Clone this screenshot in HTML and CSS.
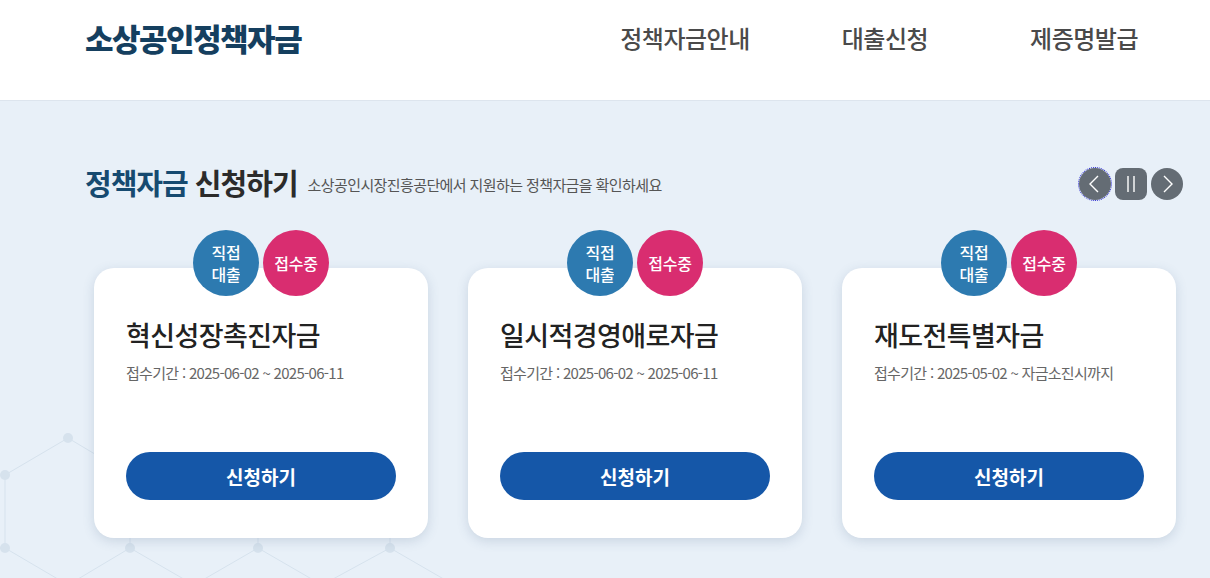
FILE: index.html
```html
<!DOCTYPE html>
<html lang="ko">
<head>
<meta charset="utf-8">
<title>소상공인정책자금</title>
<link rel="stylesheet" href="styles.css">
</head>
<body>
<header class="header">
  <div class="logo">소상공인정책자금</div>
  <nav class="nav">
    <a class="nav-item nav-1">정책자금안내</a>
    <a class="nav-item nav-2">대출신청</a>
    <a class="nav-item nav-3">제증명발급</a>
  </nav>
</header>
<main class="main">
  <svg class="bg-net" width="1210" height="477" viewBox="0 0 1210 477" aria-hidden="true">
    <g stroke="#d6e2ed" stroke-width="1" fill="none">
      <path d="M5 374 L68 337 L130 374 M5 374 L5 447 M130 374 L130 447 M5 447 L68 484 L130 447 M130 447 L194 484 L258 447 L322 484 L390 447 L454 484 M258 447 L258 420 M390 447 L390 420 M-40 447 L5 447"/>
    </g>
    <g fill="#d6e2ed">
      <circle cx="68" cy="337" r="5"/>
      <circle cx="5" cy="374" r="5"/>
      <circle cx="5" cy="447" r="5"/>
      <circle cx="130" cy="447" r="5"/>
      <circle cx="258" cy="447" r="5"/>
      <circle cx="390" cy="447" r="5"/>
    </g>
  </svg>
  <div class="title-row">
    <h2 class="sec-title"><span class="accent">정책자금</span> 신청하기</h2>
    <p class="sec-sub">소상공인시장진흥공단에서 지원하는 정책자금을 확인하세요</p>
    <div class="controls">
      <button class="ctl ctl-round ctl-focus" aria-label="이전">
        <svg width="32" height="32" viewBox="0 0 32 32"><path d="M19 8 L11 16 L19 24" stroke="#fff" stroke-width="1.4" fill="none"/></svg>
      </button>
      <button class="ctl ctl-square" aria-label="정지">
        <svg width="32" height="32" viewBox="0 0 32 32"><path d="M13 8 V24 M19 8 V24" stroke="#fff" stroke-width="1.4" fill="none"/></svg>
      </button>
      <button class="ctl ctl-round" aria-label="다음">
        <svg width="32" height="32" viewBox="0 0 32 32"><path d="M13 8 L21 16 L13 24" stroke="#fff" stroke-width="1.4" fill="none"/></svg>
      </button>
    </div>
  </div>
  <div class="cards">
    <div class="card">
      <div class="badges"><span class="badge badge-blue"><span class="bl">직접</span><span class="bl">대출</span></span><span class="badge badge-pink">접수중</span></div>
      <h3 class="card-title">혁신성장촉진자금</h3>
      <p class="card-date">접수기간 : 2025-06-02 ~ 2025-06-11</p>
      <a class="card-btn">신청하기</a>
    </div>
    <div class="card">
      <div class="badges"><span class="badge badge-blue"><span class="bl">직접</span><span class="bl">대출</span></span><span class="badge badge-pink">접수중</span></div>
      <h3 class="card-title">일시적경영애로자금</h3>
      <p class="card-date">접수기간 : 2025-06-02 ~ 2025-06-11</p>
      <a class="card-btn">신청하기</a>
    </div>
    <div class="card">
      <div class="badges"><span class="badge badge-blue"><span class="bl">직접</span><span class="bl">대출</span></span><span class="badge badge-pink">접수중</span></div>
      <h3 class="card-title">재도전특별자금</h3>
      <p class="card-date">접수기간 : 2025-05-02 ~ 자금소진시까지</p>
      <a class="card-btn">신청하기</a>
    </div>
  </div>
</main>
</body>
</html>
```
FILE: styles.css
```css
* { box-sizing: border-box; }
html, body { margin: 0; padding: 0; }
body {
  width: 1210px;
  height: 578px;
  overflow: hidden;
  font-family: "Noto Sans CJK KR", "Noto Sans", sans-serif;
  background: #e8f0f8;
}
.header {
  height: 101px;
  background: #fff;
  border-bottom: 1px solid #dde5ee;
  display: flex;
  align-items: center;
  padding-left: 85px;
}
.logo {
  font-size: 31px;
  font-weight: 900;
  color: #153f5f;
  letter-spacing: -1.5px;
  margin-top: -26px;
}
.nav {
  display: flex;
  margin-left: auto;
  margin-top: -26px;
}
.nav-item {
  font-size: 24px;
  font-weight: 500;
  color: #4a4a4a;
  letter-spacing: -0.5px;
}
.nav-1 { margin-right: 92px; }
.nav-2 { margin-right: 102px; }
.nav-3 { margin-right: 72px; }
.main {
  position: relative;
  height: 477px;
}
.bg-net {
  position: absolute;
  left: 0;
  top: 0;
}
.title-row {
  position: relative;
  display: flex;
  align-items: center;
  padding: 62px 27px 0 85px;
  height: 100px;
}
.sec-title {
  margin: 0;
  font-size: 29px;
  font-weight: 700;
  color: #2b2b2b;
  letter-spacing: -1px;
}
.accent { color: #164a70; }
.sec-sub {
  margin: 5px 0 0 10px;
  font-size: 15px;
  color: #555;
  letter-spacing: -0.6px;
}
.controls {
  margin-left: auto;
  display: flex;
  gap: 4px;
  margin-top: 4px;
}
.ctl {
  width: 32px;
  height: 32px;
  padding: 0;
  border: none;
  background: #646c74;
  display: flex;
  align-items: center;
  justify-content: center;
}
.ctl-round { border-radius: 50%; }
.ctl-square { border-radius: 8px; }
.ctl-focus { outline: 1px dotted #2a2ad0; outline-offset: 0; }
.cards {
  position: relative;
  display: flex;
  gap: 40px;
  padding: 67px 0 0 94px;
}
.card {
  position: relative;
  width: 334px;
  height: 270px;
  background: #fff;
  border-radius: 20px;
  box-shadow: 0 3px 12px rgba(60, 90, 130, 0.18);
  padding: 49px 32px 38px;
  display: flex;
  flex-direction: column;
}
.badges {
  position: absolute;
  top: -38px;
  left: 0;
  right: 0;
  display: flex;
  justify-content: center;
  gap: 4px;
}
.badge {
  width: 66px;
  height: 66px;
  border-radius: 50%;
  color: #fff;
  font-size: 16px;
  line-height: 22px;
  font-weight: 500;
  display: flex;
  flex-direction: column;
  align-items: center;
  justify-content: center;
  text-align: center;
  letter-spacing: -0.3px;
}
.bl {
  display: block;
  height: 22px;
  line-height: 22px;
  overflow: hidden;
}
.badge-blue { background: #2d7ab0; }
.badge-pink { background: #d92d70; }
.card-title {
  margin: 0;
  font-size: 27px;
  line-height: 36px;
  font-weight: 500;
  color: #222;
  letter-spacing: -0.6px;
}
.card-date {
  margin: 9px 0 0;
  font-size: 15px;
  line-height: 22px;
  color: #666;
  letter-spacing: -0.7px;
}
.card-btn {
  margin-top: auto;
  height: 48px;
  border-radius: 24px;
  background: #1557a8;
  color: #fff;
  font-size: 19px;
  font-weight: 700;
  display: flex;
  align-items: center;
  justify-content: center;
  letter-spacing: 0;
}
```
